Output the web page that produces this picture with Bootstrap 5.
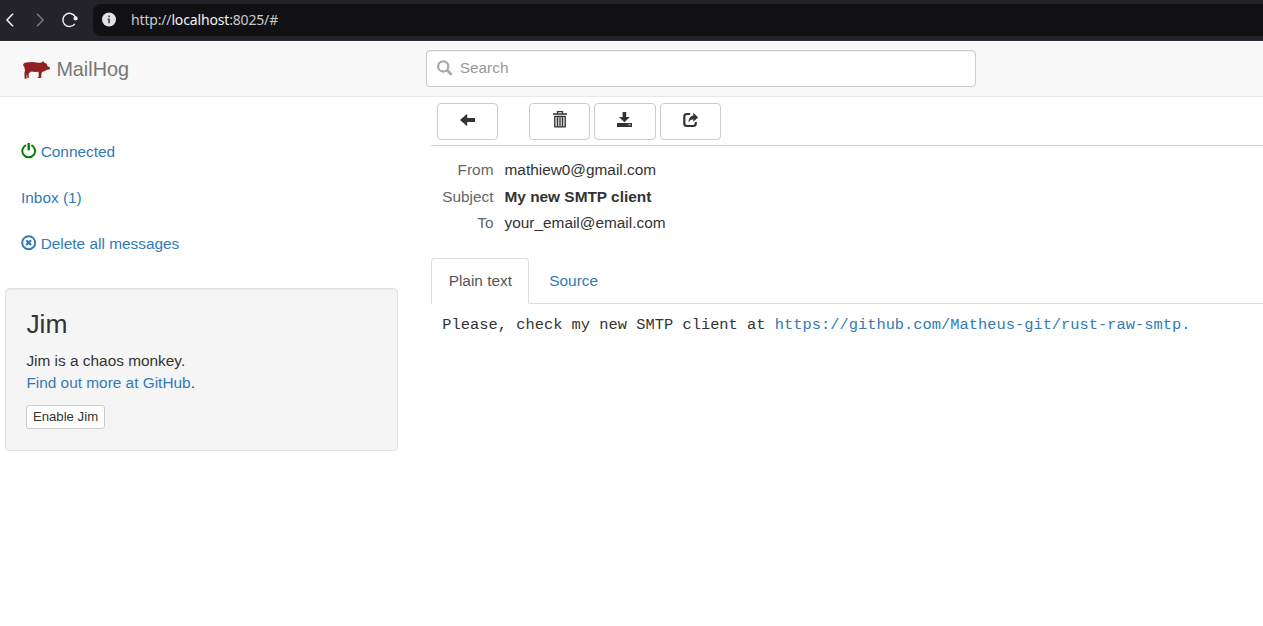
<!DOCTYPE html>
<html lang="en">
<head>
<meta charset="utf-8">
<meta name="viewport" content="width=device-width, initial-scale=1">
<title>MailHog</title>
<link href="https://cdn.jsdelivr.net/npm/bootstrap@5.3.0/dist/css/bootstrap.min.css" rel="stylesheet">
<style>
body{font:15.4px/22px "Liberation Sans",Arial,sans-serif;color:#333;background:#fff;height:626px;overflow:hidden}
a{color:#337ab7;text-decoration:none}
svg{display:block;flex:none}
.chrome{height:41px;background:#242329;padding-left:2px;border-bottom:1px solid #302e36}
.reload{margin-left:10px}
.address{height:32px;margin:-1px 0 0 13px;background:#111113;border-radius:8px 0 0 8px;padding-left:9px;color:#c9c9cd;font:14px/20px "Noto Sans",sans-serif}
.address .url{margin-left:14px;letter-spacing:-.16px}
.address b{font-weight:400;color:#f2f2f4}
.topbar{height:56px;background:#f8f8f8;border-bottom:1px solid #e7e7e7;padding:0 0 0 22px}
.brand{width:404px;font-size:19.8px;color:#777;gap:5.4px}
.search{width:550px;height:37px;border:1px solid #ccc;border-radius:4px;background:#fff;padding:0 0 1px 10px;box-shadow:inset 0 1px 1px rgba(0,0,0,.075)}
.search input{border:0;padding:0 0 0 6.7px;height:22px;background:transparent;font-size:15.4px;line-height:22px;box-shadow:none!important}
.search input::placeholder{color:#999;opacity:1}
.side{width:398px;padding:44px 0 0 5px}
.side .nav-link{color:#337ab7;height:46px;padding:0 0 0 16px;gap:3.7px;line-height:22px}
.side .nav-link svg{margin-top:1.5px}
.well{height:163px;margin-top:9px;padding:21px 20.4px;background:#f5f5f5;border:1px solid #e3e3e3;border-radius:4px;box-shadow:inset 0 1px 1px rgba(0,0,0,.05)}
.well h3{font-size:26.4px;line-height:29px;margin:0 0 11px;font-weight:400}
.well p{margin:0 0 11px}
.well .btn{font-size:13.2px;line-height:18px;padding:2px 5.5px;border:1px solid #ccc;border-radius:3px;background:#fff;color:#333;height:24px;display:block}
.content{margin-left:33px;min-width:0}
.tools{height:49px;padding:6px 0 0 6px;border-bottom:1px solid #ccc}
.tools .btn{width:61px;height:37px;padding:0 0 3px;border:1px solid #ccc;border-radius:4px;background:#fff;color:#333}
.tools .btn-group-gap{margin-left:31px;gap:4px}
.tools .btn.btn-wide{width:62px;padding-right:1px}
.headers{padding:11.25px 0 0 11px;grid-template-columns:51.5px auto;column-gap:11px;line-height:26.4px;height:112px;align-content:start}
.headers dt{font-weight:400;color:#666;text-align:right}
.headers dd{margin:0}
.nav-tabs{height:46px;border-bottom:1px solid #ddd}
.nav-tabs .nav-link{height:46px;padding:11px 16.3px 11px 16.7px;color:#337ab7;border-radius:4px 4px 0 0;margin-right:2.3px}
.nav-tabs .nav-link.active{color:#555;border-color:#ddd #ddd #fff}
.message{font:15.4px/22px "Liberation Mono","Courier New",monospace;color:#333;margin:0;padding:10px 0 0 11.3px;overflow:visible}
</style>
</head>
<body>
<div class="chrome d-flex align-items-center">
  <svg width="16" height="18" viewBox="0 0 16 18" fill="none" stroke="#ededf0" stroke-width="1.6"><path d="M11 2.8 5 9l6 6.2"/></svg>
  <svg class="ms-3" width="16" height="18" viewBox="0 0 16 18" fill="none" stroke="#77767d" stroke-width="1.6"><path d="M3 2.8 9 9l-6 6.2"/></svg>
  <svg class="reload" width="20" height="18" viewBox="0 0 20 18"><path d="M14.8 12.9A6.6 6.6 0 1 1 15.6 6.5" fill="none" stroke="#ededf0" stroke-width="1.5"/><circle cx="15.6" cy="7.4" r="2.1" fill="#ededf0"/></svg>
  <div class="address flex-grow-1 d-flex align-items-center">
    <svg width="15" height="15" viewBox="0 0 15 15"><circle cx="7" cy="7.5" r="7" fill="#e2e2e6"/><path d="M6.1 3.5H8v1.7H6.1zM5.5 6.5H8v4.7H6.1V8h-.6z" fill="#55545a"/></svg>
    <span class="url">http://<b>localhost</b>:8025/#</span>
  </div>
</div>
<nav class="topbar d-flex align-items-center">
  <div class="brand d-flex align-items-center">
    <svg width="29" height="20" viewBox="0 0 29 20" class="mt-1"><path fill="#931f23" d="M1 4.2Q1.4 2 4 1.6Q9 .6 13 1.2Q17 2 19.6 1.6L21.2 0 22.1 1.6 24.6 2.8 25.4 5 28.2 6.8 27.7 8.2 24.6 9Q22.5 10.5 20.4 10.7L19.4 12.6 19.2 16.9H15.3L16.8 15.4 16.5 10.8Q12 11.2 9.2 10.6L6.7 12.6 6.9 16.8H5.2V13.4L4.6 14.6V17.7H2.6L2.4 12.2 3 9.3 2.2 5.8Z"/></svg>
    <span>MailHog</span>
  </div>
  <div class="search d-flex align-items-center">
    <svg width="16" height="16" viewBox="0 0 16 16" fill="none" stroke="#aaa"><circle cx="6.2" cy="6.4" r="5.1" stroke-width="2.3"/><path d="m9.8 10 4.8 4.8" stroke-width="2.8"/></svg>
    <input class="form-control" type="text" placeholder="Search" aria-label="Search">
  </div>
</nav>
<div class="d-flex">
  <aside class="side flex-shrink-0">
    <nav class="nav flex-column">
      <a class="nav-link d-flex" href="#"><svg width="16" height="16" viewBox="0 0 16 16" fill="none" stroke="green" stroke-width="2"><path d="M5 2.1a6.4 6.4 0 1 0 5.4 0"/><path d="M7.7 0v7.3" stroke-width="2.4"/></svg><span>Connected</span></a>
      <a class="nav-link" href="#">Inbox (1)</a>
      <a class="nav-link d-flex" href="#"><svg width="16" height="16" viewBox="0 0 16 16" fill="none" stroke="#337ab7"><circle cx="7.7" cy="7.7" r="6.5" stroke-width="1.9"/><path d="m5.3 5.3 4.8 4.8m0-4.8-4.8 4.8" stroke-width="2.1"/></svg><span>Delete all messages</span></a>
    </nav>
    <div class="well">
      <h3>Jim</h3>
      <p>Jim is a chaos monkey.<br><a href="#">Find out more at GitHub</a>.</p>
      <button class="btn" type="button">Enable Jim</button>
    </div>
  </aside>
  <main class="content flex-grow-1">
    <div class="tools d-flex">
      <button class="btn d-flex align-items-center justify-content-center" type="button" aria-label="Back"><svg width="16" height="14" viewBox="0 0 16 14"><path d="M0 7 7.2.8V5H15v4H7.2v4.2z" fill="#333"/></svg></button>
      <div class="btn-group-gap d-flex">
        <button class="btn d-flex align-items-center justify-content-center" type="button" aria-label="Delete"><svg width="16" height="18" viewBox="0 0 16 18"><path d="M5.5 3V.7h5V3M1 3h14" fill="none" stroke="#333" stroke-width="1.3"/><path d="M2.7 5.3h10.6v10.5H2.7z" fill="#ccc" stroke="#333" stroke-width="1.2"/><path d="M5.5 5.5v10M8 5.5v10M10.5 5.5v10" stroke="#333" stroke-width="1.1"/></svg></button>
        <button class="btn btn-wide d-flex align-items-center justify-content-center" type="button" aria-label="Download"><svg width="16" height="16" viewBox="0 0 16 16" fill="#333"><path d="M5.6 0h3.6v5h3.6L7.4 10.2 2 5h3.6zM0 11h15v4H0z"/><path d="M11.5 12.8h2" stroke="#fff"/></svg></button>
        <button class="btn d-flex align-items-center justify-content-center" type="button" aria-label="Release"><svg width="16" height="16" viewBox="0 0 16 16"><path d="M7.2 2H4Q1.3 2 1.3 4.5v7Q1.3 14 4 14h6q2.8 0 2.8-2.5V10" fill="none" stroke="#333" stroke-width="2.2"/><path d="m10.3.8 4.8 4.6-4.8 4.4V7.2Q7.3 7.3 5.5 10.5 5.8 4 10.3 3.5z" fill="#333"/></svg></button>
      </div>
    </div>
    <dl class="headers d-grid mb-0">
      <dt>From</dt><dd>mathiew0@gmail.com</dd>
      <dt>Subject</dt><dd class="fw-bold">My new SMTP client</dd>
      <dt>To</dt><dd>your_email@email.com</dd>
    </dl>
    <ul class="nav nav-tabs">
      <li class="nav-item"><a class="nav-link active" href="#">Plain text</a></li>
      <li class="nav-item"><a class="nav-link" href="#">Source</a></li>
    </ul>
    <pre class="message">Please, check my new SMTP client at <a href="#">https://github.com/Matheus-git/rust-raw-smtp.</a></pre>
  </main>
</div>
<script src="https://cdn.jsdelivr.net/npm/bootstrap@5.3.0/dist/js/bootstrap.bundle.min.js"></script>
</body>
</html>
